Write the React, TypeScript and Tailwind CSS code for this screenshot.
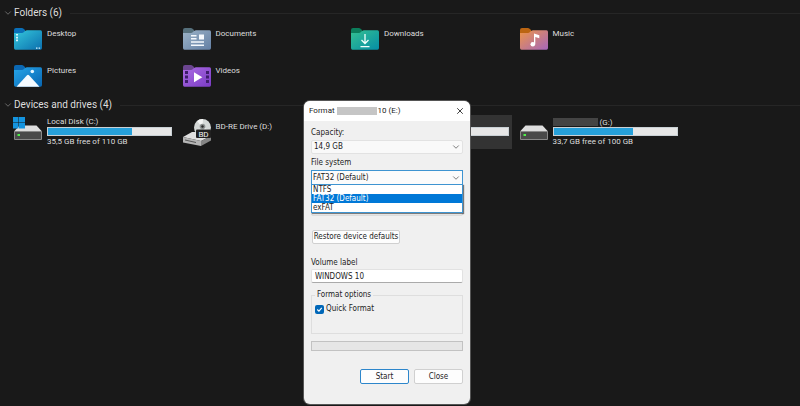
import type { ReactNode } from "react";
import { ChevronDown, X } from "lucide-react";

function FolderShape({ id, tab, from, to, children }: { id: string; tab: string; from: string; to: string; children: ReactNode }) {
  return (
    <svg className="w-7 h-6 shrink-0" viewBox="0 0 28 24" aria-hidden="true">
      <defs>
        <linearGradient id={id} x1="0" y1="0" x2="1" y2="1">
          <stop offset="0" stopColor={from} />
          <stop offset="1" stopColor={to} />
        </linearGradient>
      </defs>
      <path d="M0 3 Q0 1 2 1 H8 Q9 1 11 3 V8 H0 Z" fill={tab} />
      <path d="M0 6 H8 Q9 6 10 5 L11 4 Q12 3.2 13 3.2 H26.5 Q28 3.2 28 5 V21 Q28 22.8 26.5 22.8 H1.5 Q0 22.8 0 21 Z" fill={`url(#${id})`} />
      {children}
    </svg>
  );
}

const folders = [
  {
    name: "Desktop",
    icon: (
      <FolderShape id="desktop" tab="#0a6fb8" from="#35c8dc" to="#0b6fae">
        <path d="M2 7h2v1.6H2zM2 9.8h2v1.6H2zM2 12.6h2v1.6H2zM22 20.4h1.5v1.4H22zM24.6 20.4h1.5v1.4h-1.5z" fill="#d8f6ff" />
      </FolderShape>
    ),
  },
  {
    name: "Documents",
    icon: (
      <FolderShape id="documents" tab="#56707c" from="#9db4c8" to="#637fa4">
        <path d="M8 8h5.500v1.400H8zM8 11h5.500v1.400H8zM8 14.300h13v1.400H8zM8 17.600h13v1.400H8zM16 7.500h5v5h-5z" fill="#f5f9fd" />
      </FolderShape>
    ),
  },
  {
    name: "Downloads",
    icon: (
      <FolderShape id="downloads" tab="#0c7d5b" from="#35c191" to="#058da6">
        <path d="M14 7v9.500M10.500 13l3.500 3.500 3.500-3.500M9.500 19.600h9" fill="none" stroke="#f0fffb" strokeWidth="1.300" />
      </FolderShape>
    ),
  },
  {
    name: "Music",
    icon: (
      <FolderShape id="music" tab="#bb6512" from="#ee9648" to="#a566bb">
        <ellipse cx="12.800" cy="17.200" rx="2.300" ry="2.200" fill="#fff" />
        <path d="M14 17V6.500l5.300 1.800v3l-4-1.300v7z" fill="#fff" />
      </FolderShape>
    ),
  },
  {
    name: "Pictures",
    icon: (
      <FolderShape id="pictures" tab="#0b68b3" from="#26a6ea" to="#0865b1">
        <path d="M2.500 22.800 13 11.300q1-1 2 0l10.500 11.500z" fill="#f4faff" />
        <circle cx="18.300" cy="7.500" r="1.800" fill="#e5f5ff" />
      </FolderShape>
    ),
  },
  {
    name: "Videos",
    icon: (
      <FolderShape id="videos" tab="#6b4590" from="#ad6ce4" to="#793bc4">
        <path d="M2 7h3v3H2zM2 11.500h3v3H2zM2 16h3v3H2zM23 7h3v3h-3zM23 11.500h3v3h-3zM23 16h3v3h-3z" fill="#3d1d6a" />
        <path d="M11 8.300v10l8.300-5z" fill="#fff" />
      </FolderShape>
    ),
  },
];

function DriveIcon({ windows = false }: { windows?: boolean }) {
  return (
    <svg className="w-7 h-6 shrink-0 overflow-visible" viewBox="0 0 28 24" aria-hidden="true">
      <path d="M5.500 8.500h17L28 14.500H0z" fill="#dedede" />
      <rect y="14" width="28" height="9" rx="1" fill="#898989" />
      <rect x="1" y="15" width="26" height="7" fill="#4a4a4a" />
      <rect x="3.500" y="17" width="2.500" height="2" fill="#4ff04a" />
      {windows && <path d="M-1 0h5.500v5.500H-1zM5 0H11v5.500H5zM-1 6h5.500v5.500H-1zM5 6H11v5.500H5z" fill="#1494df" />}
    </svg>
  );
}

function DiscIcon() {
  return (
    <svg className="w-7 h-7 shrink-0" viewBox="0 0 28 28" aria-hidden="true">
      <path d="M0 19 9 14h10l9 4-10 5z" fill="#e0e0e0" />
      <path d="M0 19l18 4v5L0 24.500z" fill="#b5b5b5" />
      <path d="M18 23l10-5v4.500L18 28z" fill="#858585" />
      <path d="M2 21.500l11 2.500v1L2 22.500z" fill="#555" />
      <circle cx="19.500" cy="9.500" r="8.500" fill="#d4d8d7" />
      <path d="M19.500 9.500 14 3a8.500 8.500 0 0 1 6-2zM19.500 9.500l8 3a8.500 8.500 0 0 1-3 3.800z" fill="#f4f5f4" />
      <circle cx="19.500" cy="8.500" r="2.800" fill="#8c9190" />
      <circle cx="19.500" cy="8.500" r="1.200" fill="#292929" />
      <rect x="13" y="11.500" width="15" height="8.500" rx="1" fill="#202020" />
      <text x="20.500" y="18.500" textAnchor="middle" fontSize="8" fill="#f2f2f2">BD</text>
    </svg>
  );
}

function Usage({ used }: { used: number }) {
  return (
    <div className="w-[125px] h-[9px] bg-[#e6e6e6] border border-[#c9d0d4]">
      <div className="h-full bg-[#26a0da]" style={{ width: `${used}%` }} />
    </div>
  );
}

function GroupTitle({ children }: { children: ReactNode }) {
  return (
    <h2 className="flex items-center h-4 pl-[3px] text-[10px] text-[#dedede]">
      <ChevronDown className="w-2.5 h-2.5 mr-px text-[#777]" />
      {children}
      <span className="flex-1 h-px ml-2 bg-[#262626]" />
    </h2>
  );
}

function Dialog() {
  return (
    <div
      role="dialog"
      aria-label="Format"
      className="absolute left-[38%] top-[101px] w-[166px] h-[303px] rounded-md overflow-hidden bg-[#f0f0f0] text-[#1c1c1c] text-[8px] leading-[10px] ring-1 ring-[#555]"
    >
      <div className="flex items-center h-5 pl-[5px] pr-[5px] bg-white">
        <span>Format</span>
        <span className="w-10 h-2 ml-0.5 mr-px bg-[#c5c5c5]" />
        <span>10 (E:)</span>
        <button aria-label="Close dialog" className="ml-auto">
          <X className="w-2.5 h-2.5" strokeWidth={2} />
        </button>
      </div>
      <form className="px-[7px] pt-[7px] font-['DejaVu_Sans_Condensed','DejaVu_Sans',sans-serif]">
        <label htmlFor="capacity" className="block">Capacity:</label>
        <div className="relative mt-0.5">
          <select id="capacity" className="block w-full h-[14px] pl-[2px] appearance-none bg-[#f9f9f9] border border-[#e2e2e2] rounded-xs">
            <option>14,9 GB</option>
          </select>
          <ChevronDown className="absolute right-0.5 top-0.5 w-2.5 h-2.5 text-[#666] pointer-events-none" />
        </div>
        <label htmlFor="filesystem" className="block mt-1">File system</label>
        <div className="relative mt-0.5">
          <select id="filesystem" defaultValue="FAT32 (Default)" className="block w-full h-[15px] pl-px appearance-none bg-[#fbfbfb] border border-[#3e94d1]">
            <option>NTFS</option>
            <option>FAT32 (Default)</option>
            <option>exFAT</option>
          </select>
          <ChevronDown className="absolute right-0.5 top-[3px] w-2.5 h-2.5 text-[#666] pointer-events-none" />
          <ul className="absolute z-10 top-[14px] left-0 w-full bg-white border border-[#3e94d1] leading-[9px] shadow-[1px_1px_1px_rgba(0,0,0,0.5)]">
            <li className="pl-px">NTFS</li>
            <li className="pl-px bg-[#0078d7] text-white">FAT32 (Default)</li>
            <li className="pl-px">exFAT</li>
          </ul>
        </div>
        <select aria-label="Allocation unit size" className="block w-full h-[14px] mt-[17px] pl-1 appearance-none bg-[#f9f9f9] border border-[#dcdcdc] rounded-xs">
          <option>8192 bytes</option>
        </select>
        <button type="button" className="block w-[88px] h-[14px] mt-[14px] ml-px bg-[#fdfdfd] border border-[#d0d0d0] rounded-xs leading-3 whitespace-nowrap">
          Restore device defaults
        </button>
        <label htmlFor="volume" className="block mt-[14px]">Volume label</label>
        <input id="volume" defaultValue="WINDOWS 10" className="block w-full h-[14px] mt-px px-[3px] bg-white border border-[#e2e2e2] border-b-[#aaa] rounded-xs" />
        <fieldset className="h-11 mt-[7px] px-[3px] border border-[#dedede]">
          <legend className="px-0.5">Format options</legend>
          <label className="flex items-center gap-0.5 mt-1">
            <span className="relative w-[9px] h-[9px]">
              <input type="checkbox" defaultChecked className="block w-[9px] h-[9px] appearance-none rounded-xs bg-[#0067b8]" />
              <svg className="absolute inset-0 w-[9px] h-[9px] pointer-events-none" viewBox="0 0 8 8">
                <path d="M2 4l1.500 1.500L6 2.500" fill="none" stroke="#fff" />
              </svg>
            </span>
            Quick Format
          </label>
        </fieldset>
        <div role="progressbar" aria-label="Format progress" className="h-[10px] mt-[7px] bg-[#e6e6e6] border border-[#c2c2c2]" />
        <div className="flex justify-end gap-[5px] mt-[18px]">
          <button type="button" className="w-[49px] h-[15px] bg-[#fdfdfd] border border-[#2d86cb] rounded-xs">Start</button>
          <button type="button" className="w-[49px] h-[15px] bg-[#fdfdfd] border border-[#d0d0d0] rounded-xs">Close</button>
        </div>
      </form>
    </div>
  );
}

export default function App() {
  return (
    <div className="relative min-h-screen pt-[5px] bg-[#191919] text-[#dedede] text-[8px] leading-3 font-[Roboto,sans-serif]">
      <section>
        <GroupTitle>Folders (6)</GroupTitle>
        <div className="grid grid-cols-4 gap-y-[13px] pl-[14px] pr-28 mt-1.5">
          {folders.map((folder) => (
            <div key={folder.name} className="flex gap-[5px]">
              {folder.icon}
              <span className="pt-px">{folder.name}</span>
            </div>
          ))}
        </div>
      </section>
      <section className="mt-[9px]">
        <GroupTitle>Devices and drives (4)</GroupTitle>
        <div className="grid grid-cols-4 pl-[14px] pr-28 mt-0.5">
          <div className="flex gap-[5px] pt-[2px]">
            <DriveIcon windows />
            <div className="whitespace-nowrap">
              <div className="h-2.5 leading-[9px]">Local Disk (C:)</div>
              <Usage used={68} />
              <div>35,5 GB free of 110 GB</div>
            </div>
          </div>
          <div className="flex gap-[5px] pt-[3px]">
            <DiscIcon />
            <span className="pt-[3px]">BD-RE Drive (D:)</span>
          </div>
          <div className="flex gap-[5px] h-[34px] pt-[2px] mr-2 bg-[#333]">
            <DriveIcon />
            <div className="pt-2.5">
              <Usage used={40} />
            </div>
          </div>
          <div className="flex gap-[5px] pt-[2px]">
            <DriveIcon />
            <div className="whitespace-nowrap">
              <div className="flex items-center gap-0.5 h-2.5 leading-[9px]">
                <span className="w-[45px] h-2 bg-[#444]" />
                (G:)
              </div>
              <Usage used={65} />
              <div>33,7 GB free of 100 GB</div>
            </div>
          </div>
        </div>
      </section>
      <Dialog />
    </div>
  );
}
